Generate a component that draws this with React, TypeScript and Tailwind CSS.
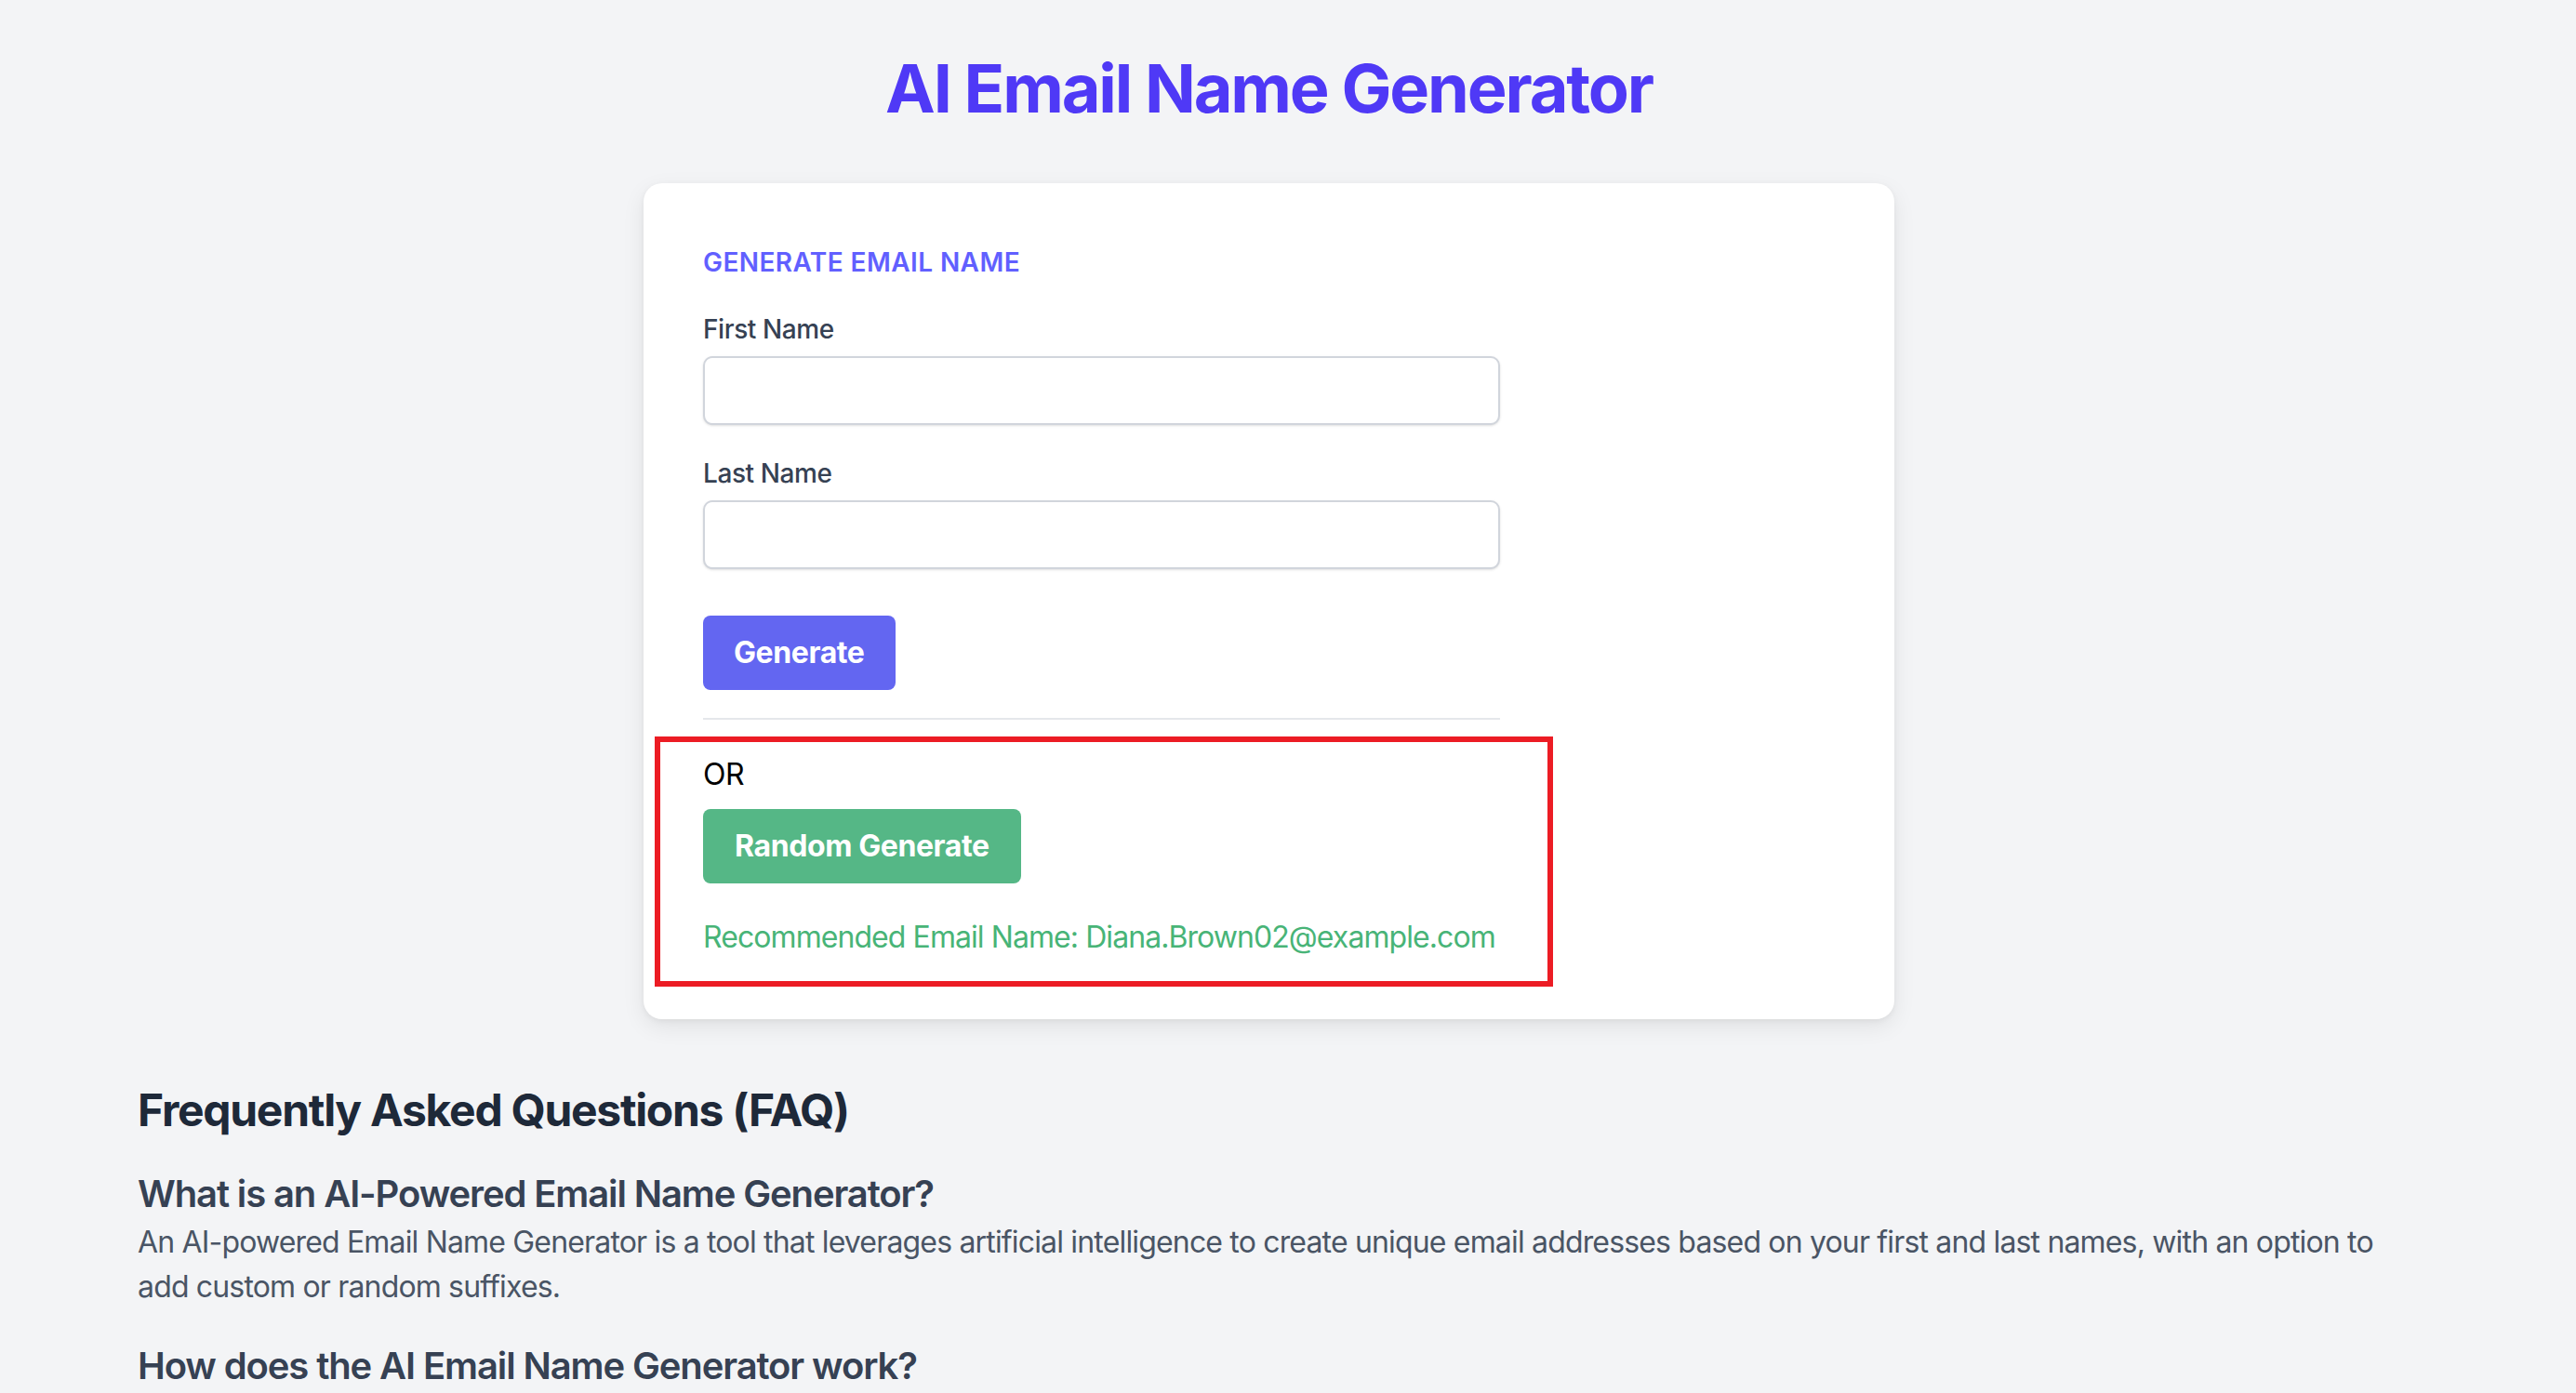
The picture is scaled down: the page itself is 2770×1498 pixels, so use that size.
import { useState } from "react";

const font = { fontFamily: "Inter, 'Noto Sans', sans-serif" };

function Field({ label, value, onChange }: { label: string; value: string; onChange: (v: string) => void }) {
    return (
        <div className="mb-[32px]">
            <label className="block text-[28px] leading-[40px] font-medium text-gray-700 mb-[9px]">{label}</label>
            <input
                value={value}
                onChange={(e) => onChange(e.target.value)}
                className="block w-full h-[74px] px-[24px] text-[28px] border-2 border-gray-300 rounded-[10px] bg-white shadow-sm outline-none"
            />
        </div>
    );
}

export default function App() {
    const [first, setFirst] = useState("");
    const [last, setLast] = useState("");

    return (
        <div className="min-h-screen bg-gray-100 tracking-[-0.025em]" style={font}>
            <div className="w-[2729px] pt-[55px] pb-[80px]">
                <h1 className="text-center text-[72px] leading-[80px] font-bold text-indigo-600 tracking-[-0.03em]">
                    AI Email Name Generator
                </h1>

                <div className="relative mx-auto mt-[62px] w-[1345px] bg-white rounded-[20px] shadow-[0_8px_24px_rgba(0,0,0,0.08),0_2px_6px_rgba(0,0,0,0.05)] px-[64px] pt-[65px] pb-[64px]">
                    <div className="w-[857px]">
                        <h2 className="text-[28px] leading-[40px] font-semibold uppercase tracking-[0.015em] text-indigo-500 mb-[32px]">
                            Generate Email Name
                        </h2>
                        <Field label="First Name" value={first} onChange={setFirst} />
                        <Field label="Last Name" value={last} onChange={setLast} />
                        <button className="mt-[18px] h-[80px] px-[33px] rounded-[8px] bg-[#6366f1] text-white text-[32px] font-bold">
                            Generate
                        </button>
                        <hr className="mt-[30px] border-0 border-t-2 border-gray-200" />
                        <p className="mt-[35px] text-[32px] leading-[48px] text-black">OR</p>
                        <button className="mt-[13px] h-[80px] px-[34px] rounded-[8px] bg-[#55b786] text-white text-[32px] font-bold">
                            Random Generate
                        </button>
                        <p className="mt-[34px] text-[32px] leading-[48px] text-[#48b477] whitespace-nowrap tracking-[-0.029em]">
                            Recommended Email Name: Diana.Brown02@example.com
                        </p>
                    </div>
                    {/* highlight frame drawn over the result block */}
                    <div className="absolute left-[12px] top-[595px] w-[966px] h-[269px] border-[6px] border-[#ec1c24] pointer-events-none" />
                </div>

                <section className="mt-[66px] pl-[148px] pr-[140px]">
                    <h2 className="text-[48px] leading-[64px] font-bold text-gray-800 mb-[30px] tracking-[-0.027em]">
                        Frequently Asked Questions (FAQ)
                    </h2>
                    <h3 className="text-[40px] leading-[56px] font-semibold text-gray-700 tracking-[-0.028em]">
                        What is an AI-Powered Email Name Generator?
                    </h3>
                    <p className="text-[32px] leading-[48px] text-gray-600 tracking-[-0.026em]">
                        An AI-powered Email Name Generator is a tool that leverages artificial intelligence to create unique email addresses based on your first and last names, with an option to add custom or random suffixes.
                    </p>
                    <h3 className="mt-[33px] text-[40px] leading-[56px] font-semibold text-gray-700 tracking-[-0.028em]">
                        How does the AI Email Name Generator work?
                    </h3>
                </section>
            </div>
        </div>
    );
}
